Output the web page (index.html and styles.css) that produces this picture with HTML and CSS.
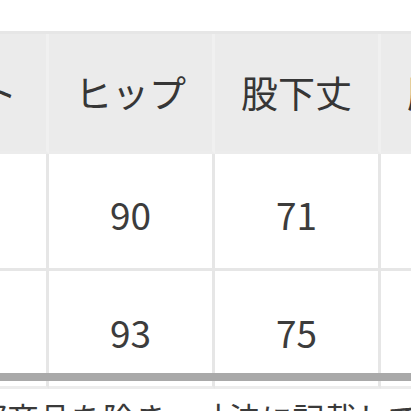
FILE: index.html
```html
<!DOCTYPE html>
<html lang="ja">
<head>
<meta charset="utf-8">
<link rel="stylesheet" href="styles.css">
</head>
<body>
<div class="viewport">
  <div class="scroller">
    <div class="size-table">
      <div class="cell head col-first">ウエスト</div>
      <div class="cell head">ヒップ</div>
      <div class="cell head">股下丈</div>
      <div class="cell head">股上丈</div>
      <div class="cell num col-first">70</div>
      <div class="cell num">90</div>
      <div class="cell num">71</div>
      <div class="cell num">28</div>
      <div class="cell num last col-first">74</div>
      <div class="cell num last">93</div>
      <div class="cell num last">75</div>
      <div class="cell num last">29</div>
    </div>
    <p class="note">※一部商品を除き、寸法に記載しているサイズは</p>
  </div>
  <div class="scrollbar"></div>
</div>
</body>
</html>
```
FILE: styles.css
```css
html, body {
  margin: 0;
  padding: 0;
  background: #ffffff;
}
body {
  width: 411px;
  height: 411px;
  overflow: hidden;
  font-family: "Noto Sans CJK JP", "Noto Sans", sans-serif;
  color: #333333;
}
.viewport {
  position: relative;
  width: 411px;
  height: 411px;
  overflow: hidden;
}
.scroller {
  margin-left: -160px;
  padding-top: 31px;
  width: 760px;
}
.size-table {
  display: grid;
  grid-template-columns: 209px 166px 166px 166px;
  grid-template-rows: 120px 117px 118px;
  border-top: 3px solid #e6e6e6;
  width: max-content;
}
.cell {
  box-sizing: border-box;
  display: flex;
  align-items: center;
  justify-content: center;
  border-right: 3px solid #e6e6e6;
  border-bottom: 3px solid #e6e6e6;
  font-size: 37px;
  line-height: 1;
}
.head {
  background: #ebebeb;
  border-right-color: #f0f0f0;
  border-bottom-color: #ececec;
  color: #363636;
}
.num {
  color: #3c3c3c;
  padding-top: 6px;
}
.last {
  border-bottom-color: #ececec;
  padding-top: 8px;
}
.note {
  margin: 0;
  padding: 6px 0 0 71px;
  font-size: 32px;
  line-height: 1.4;
  white-space: nowrap;
  color: #3a3a3a;
}
.scrollbar {
  position: absolute;
  left: 0;
  top: 373px;
  width: 411px;
  height: 8px;
  background: #a9a9a9;
}
```
